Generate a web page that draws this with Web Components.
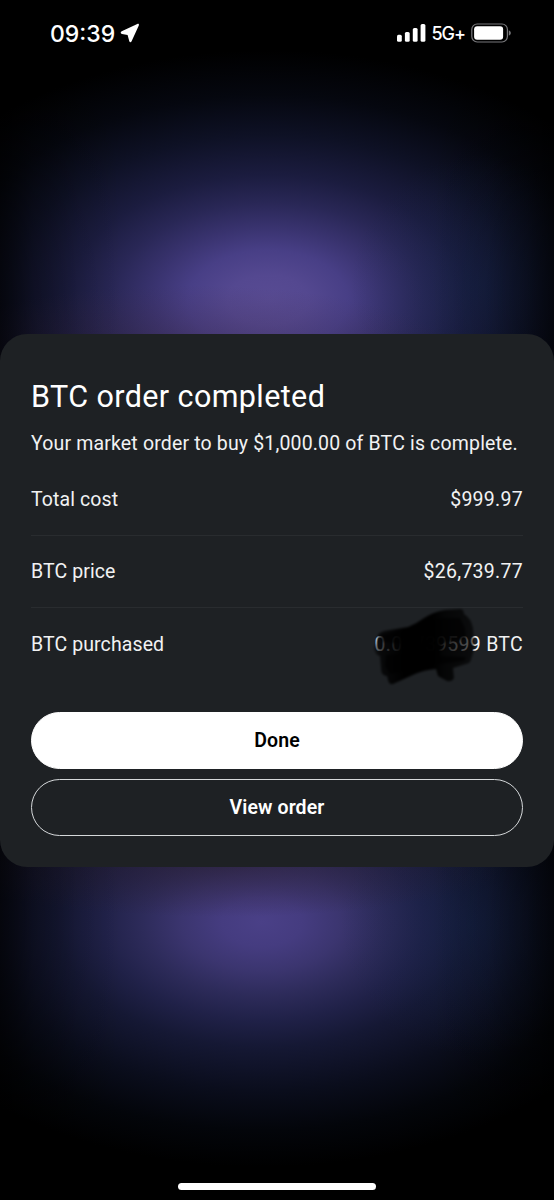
<!DOCTYPE html>
<html lang="en">
<head>
<meta charset="utf-8">
<title>BTC order completed</title>
<style>
html,body{margin:0;padding:0;background:#000}
body{width:554px;height:1200px;overflow:hidden}
</style>
</head>
<body>
<order-screen></order-screen>
<script>
const define = (name, html) => {
  const t = document.createElement('template');
  t.innerHTML = html;
  customElements.define(name, class extends HTMLElement {
    constructor() {
      super();
      this.attachShadow({mode: 'open'}).appendChild(t.content.cloneNode(true));
    }
  });
};

define('status-bar', `
<style>
:host{display:flex;box-sizing:border-box;height:66px;padding:0 43px 0 50px;justify-content:space-between;align-items:center;color:#fff;font-family:Inter,sans-serif}
.g{display:flex;align-items:center}
.time{font-size:23px;font-weight:500;letter-spacing:0;line-height:28px;margin-top:1px}
.net{font-size:18px;font-weight:500;letter-spacing:-1px;line-height:24px;margin:2px 6px 0 5px}
svg{display:block}
.loc{margin-left:5px}
</style>
<div class="g"><span class="time">09:39</span>
<svg class="loc" width="20" height="20" viewBox="0 0 20 20"><path d="M17.3 1 1.7 8.3C.2 9 .4 10.6 2 10.9L7.6 12 9.3 18.2C9.7 19.6 11 19.6 11.6 18.3L18.8 2.5C19.3 1.2 18.5.5 17.3 1Z" fill="#fff"/></svg></div>
<div class="g">
<svg width="29" height="20" viewBox="0 0 29 20" fill="#fff"><rect x="0" y="11.8" width="4.8" height="7" rx="1.5"/><rect x="7.9" y="9" width="4.8" height="9.8" rx="1.5"/><rect x="15.8" y="5" width="4.8" height="13.8" rx="1.5"/><rect x="23.6" y="1.1" width="4.8" height="17.7" rx="1.5"/></svg>
<span class="net">5G+</span>
<svg width="40" height="20" viewBox="0 0 40 20"><rect x=".8" y="1" width="35.6" height="18" rx="5.4" fill="none" stroke="#77777a" stroke-width="1.2"/><rect x="3.1" y="3.3" width="29" height="13.4" rx="3" fill="#fff"/><path d="M37.8 7.2Q39.9 8.2 39.9 10T37.8 12.8Z" fill="#77777a"/></svg>
</div>`);

define('detail-row', `
<style>
:host{display:flex;box-sizing:border-box;height:72.5px;align-items:center;justify-content:space-between;border-bottom:1px solid #292c2f;color:#f1f2f3;font:400 19.5px/24px Roboto,sans-serif;letter-spacing:.1px;padding-top:2px}
:host([last]){border-bottom-color:transparent}
.v{display:block;position:relative;letter-spacing:.28px}
</style>
<span><slot name="label"></slot></span><span class="v"><slot></slot></span>`);

define('ink-scribble', `
<style>
:host{position:absolute;right:49px;top:-25px;width:102px;height:80px;pointer-events:none}
svg{display:block;overflow:visible}
</style>
<svg width="102" height="80" viewBox="0 0 102 80">
<defs><linearGradient id="ink" gradientUnits="userSpaceOnUse" x1="0" y1="0" x2="102" y2="0"><stop offset="0" stop-color="#050607" stop-opacity=".35"/><stop offset=".08" stop-color="#050607" stop-opacity=".72"/><stop offset=".22" stop-color="#030404" stop-opacity=".88"/><stop offset=".32" stop-color="#020303"/><stop offset=".6" stop-color="#020303" stop-opacity=".99"/><stop offset=".72" stop-color="#020303" stop-opacity=".82"/><stop offset="1" stop-color="#060708" stop-opacity=".64"/></linearGradient>
<filter id="soft" x="-10%" y="-10%" width="120%" height="120%"><feGaussianBlur stdDeviation=".9"/></filter></defs>
<g filter="url(#soft)"><path fill="url(#ink)" d="M5 30Q5 25 12 23L36 19Q44 16 52 10Q61 4 73 2L88 1Q92 1 92 6Q99 10 101 20L102 38Q102 44 99 51Q99 55 94 56L81 60 82 70Q80 74 75 73L66 68 64 61Q52 62 43 66L21 76Q17 77 16 72L15 68Q9 68 9 60L8 48Q3 47 2 40Q4 36 5 30Z"/>
<path fill="#020303" opacity=".65" d="M9 27 32 22 56 13 70 10 88 10 93 20 94 31 70 35 68 48 94 49 92 53 68 56 48 61 18 66 13 58 14 47 28 46 28 36 11 34Z"/></g>
</svg>`);

define('pill-button', `
<style>
:host{display:block}
button{display:block;box-sizing:border-box;width:100%;height:57px;border:1px solid #fff;border-radius:29px;margin:0;padding:1px 0 0;background:#fff;color:#000;font:600 19.5px/24px Roboto,sans-serif;letter-spacing:.1px}
:host([outline]) button{background:transparent;color:#fff;border-color:#d5d8da;padding-top:2px}
</style>
<button><slot></slot></button>`);

define('order-card', `
<style>
:host{display:flex;flex-direction:column;box-sizing:border-box;height:533px;padding:44px 31px 31.5px;border-radius:27px;background:#1e2124;color:#fff;font-family:Roboto,sans-serif}
h1{margin:0;font-size:30.5px;line-height:38px;font-weight:400;letter-spacing:.4px;white-space:nowrap}
p{margin:16px 0 0;font-size:19.5px;line-height:24px;letter-spacing:.16px;color:#f1f2f3;white-space:nowrap}
.rows{margin-top:7px}
.actions{display:flex;flex-direction:column;gap:10px;margin-top:auto}
</style>
<h1><slot name="title"></slot></h1><p><slot name="summary"></slot></p>
<div class="rows"><slot></slot></div>
<div class="actions"><slot name="action"></slot></div>`);

define('home-indicator', `
<style>:host{display:block;width:198px;height:7px;border-radius:4px;background:#fff;margin:auto auto 10px}</style>`);

define('order-screen', `
<style>
:host{display:flex;flex-direction:column;width:554px;height:1200px;background:
linear-gradient(90deg,rgba(0,0,0,.62),rgba(0,0,0,.28) 6%,rgba(0,0,0,.08) 14%,rgba(0,0,0,0) 22%,rgba(0,0,0,0) 78%,rgba(0,0,0,.12) 88%,rgba(0,0,0,.35) 95%,rgba(0,0,0,.62)),
radial-gradient(ellipse 260px 65px at 190px 350px,rgba(66,44,74,.4),rgba(66,44,74,0)),
radial-gradient(ellipse 290px 55px at 220px 862px,rgba(42,30,48,.6),rgba(42,30,48,0)),
radial-gradient(ellipse 130px 130px at 480px 285px,rgba(18,38,76,.4),rgba(18,38,76,.15) 55%,rgba(18,38,76,0)),
radial-gradient(ellipse 130px 130px at 470px 925px,rgba(18,38,76,.4),rgba(18,38,76,.15) 55%,rgba(18,38,76,0)),
radial-gradient(ellipse 400px 250px at 268px 300px,#584b93 0,#544890 10%,#483f86 20%,#39336f 29%,#292756 39%,#1b1c3f 50%,#0e1125 66%,#05070f 82%,rgba(1,1,4,0) 100%) 0 0/100% 600px no-repeat,
radial-gradient(ellipse 400px 245px at 262px 322px,#4a4087 0,#453c80 10%,#3b356f 20%,#2d2b5a 30%,#202148 40%,#151834 51%,#0a0d1c 69%,#03050a 85%,rgba(1,1,4,0) 100%) 0 600px/100% 600px no-repeat,#000}
order-card{margin-top:268px}
</style>
<status-bar></status-bar>
<order-card>
<span slot="title">BTC order completed</span>
<span slot="summary">Your market order to buy $1,000.00 of BTC is complete.</span>
<detail-row><span slot="label">Total cost</span>$999.97</detail-row>
<detail-row><span slot="label">BTC price</span>$26,739.77</detail-row>
<detail-row last><span slot="label">BTC purchased</span>0.03739599 BTC<ink-scribble></ink-scribble></detail-row>
<pill-button slot="action">Done</pill-button>
<pill-button slot="action" outline>View order</pill-button>
</order-card>
<home-indicator></home-indicator>`);
</script>
</body>
</html>
